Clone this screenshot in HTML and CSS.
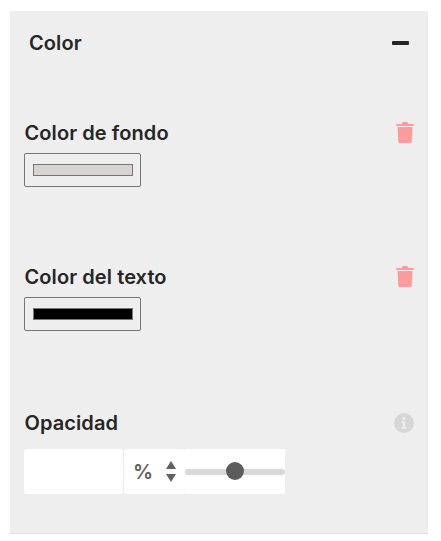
FILE: index.html
```html
<!DOCTYPE html>
<html lang="es">
<head>
<meta charset="utf-8">
<title>Color</title>
<link rel="stylesheet" href="styles.css">
</head>
<body>
<section class="panel">
  <header class="panel-head">
    <h2 class="panel-title">Color</h2>
    <span class="minus"></span>
  </header>
  <div class="field field-bg">
    <div class="field-head">
      <h3 class="label">Color de fondo</h3>
      <svg class="trash" viewBox="0 0 18 21" width="18" height="21"><path d="M5.700 2 6.300.5Q6.500 0 7 0h4q.5 0 .7.5L12.300 2H17a1 1 0 0 1 1 1v1H0V3a1 1 0 0 1 1-1zM1.500 5h15l-.8 14.400a1.600 1.600 0 0 1-1.600 1.600H3.900a1.600 1.600 0 0 1-1.600-1.600z"/></svg>
    </div>
    <div class="swatch"><span class="swatch-fill fill-light"></span></div>
  </div>
  <div class="field field-text">
    <div class="field-head">
      <h3 class="label">Color del texto</h3>
      <svg class="trash" viewBox="0 0 18 21" width="18" height="21"><path d="M5.700 2 6.300.5Q6.500 0 7 0h4q.5 0 .7.5L12.300 2H17a1 1 0 0 1 1 1v1H0V3a1 1 0 0 1 1-1zM1.500 5h15l-.8 14.400a1.600 1.600 0 0 1-1.600 1.600H3.900a1.600 1.600 0 0 1-1.600-1.600z"/></svg>
    </div>
    <div class="swatch"><span class="swatch-fill fill-dark"></span></div>
  </div>
  <div class="field field-opacity">
    <div class="field-head">
      <h3 class="label">Opacidad</h3>
      <svg class="info" viewBox="0 0 20 20" width="20" height="20"><circle cx="10" cy="10" r="10" fill="#d6d6d6"/><circle cx="10" cy="5.600" r="1.700" fill="#eee"/><path d="M7.800 8.300h3.500v6h1.100v1.600H7.800v-1.600h1V9.900H7.800z" fill="#eee"/></svg>
    </div>
    <div class="opacity-row">
      <div class="num"></div>
      <div class="unit">
        <span class="pct">%</span>
        <svg class="stepper" viewBox="0 0 10 21" width="10" height="21"><path d="M5 0 10 8H0zM0 13H10L5 21z"/></svg>
      </div>
      <div class="slider">
        <div class="track"></div>
        <div class="thumb"></div>
      </div>
    </div>
  </div>
</section>
</body>
</html>
```
FILE: styles.css
```css
* { box-sizing: border-box; }
html, body { margin: 0; padding: 0; background: #fff; }
body { padding: 11px 13px 0 10px; font-family: Inter, "Liberation Sans", sans-serif; color: #262626; }
.panel { background: #eee; height: 523px; border-bottom: 1px solid #e0e0e0; padding: 0 14px; }
.panel-head { display: flex; justify-content: space-between; align-items: center; height: 64px; padding: 0 5px; }
.panel-title { margin: 0; font-size: 20px; line-height: 24px; font-weight: 600; letter-spacing: .1px; }
.minus { width: 17px; height: 4px; border-radius: 1px; background: #262626; }
.field-head { display: flex; justify-content: space-between; align-items: center; height: 24px; }
.label { margin: 0 0 0 .5px; font-size: 20px; line-height: 24px; font-weight: 600; letter-spacing: .08px; }
.field-bg { margin-top: 46px; }
.field-text { margin-top: 78px; }
.field-opacity { margin-top: 80px; }
.trash { fill: #ff9a9d; margin-top: -1px; }
.swatch { width: 117px; height: 34px; margin-top: 8px; padding: 10px 7px 10px 8px; border: 1px solid #767676; border-radius: 2px; }
.swatch-fill { display: block; height: 12px; border: 1px solid #767676; }
.fill-light { background: #d8d3d3; }
.fill-dark { background: #000; }
.opacity-row { display: flex; height: 45px; margin-top: 14px; }
.num { width: 99px; background: #fff; border-radius: 3px; }
.unit { width: 61px; margin-left: 1px; display: flex; align-items: center; background: #fff; border-radius: 3px; padding-left: 9px; }
.pct { font-size: 20px; font-weight: 600; color: #606060; width: 33px; }
.stepper { fill: #606060; }
.slider { position: relative; width: 100px; background: #fff; display: flex; align-items: center; }
.track { width: 100%; height: 6px; border-radius: 3px; background: #d9d9d9; }
.thumb { position: absolute; left: 41px; top: 13px; width: 18px; height: 18px; border-radius: 50%; background: #5c5c5c; }
```
